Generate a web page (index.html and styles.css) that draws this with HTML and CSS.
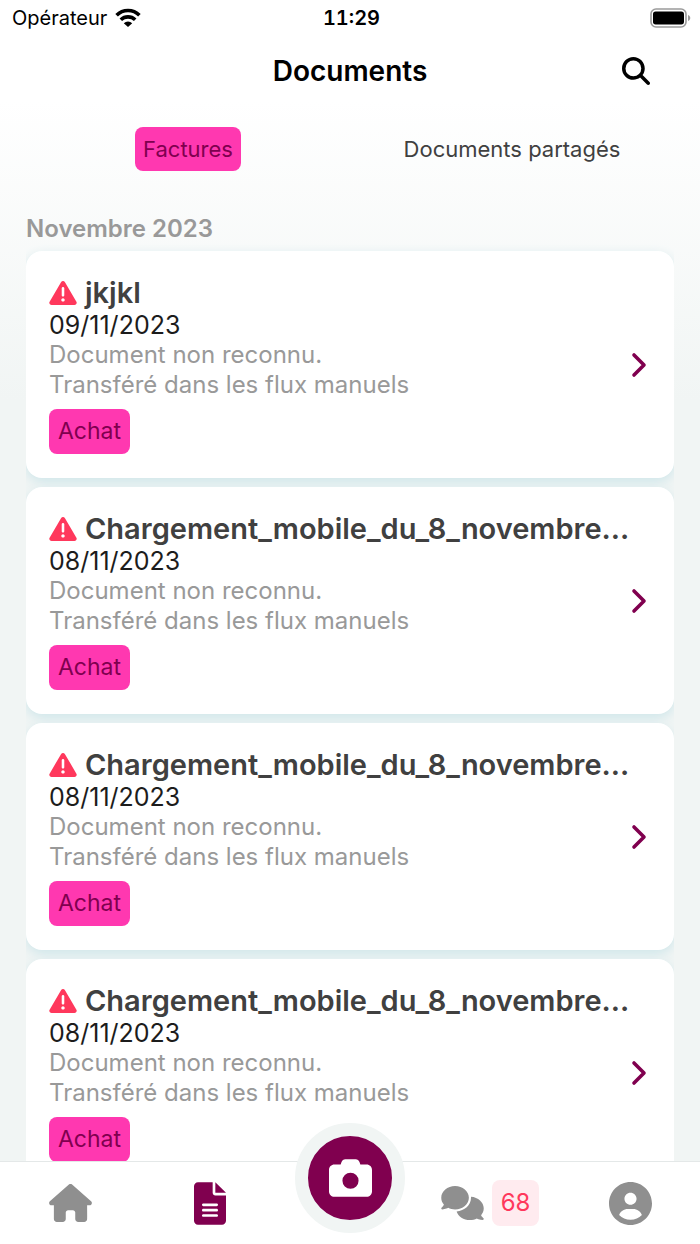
FILE: index.html
```
<!DOCTYPE html>
<html lang="fr">
  <head>
    <meta charset="UTF-8" />
    <meta name="viewport" content="width=device-width, initial-scale=1.0" />
    <title>Documents</title>
    <link rel="stylesheet" href="styles.css">
  </head>
  <body>
    <!-- shared icons -->
    <svg class="sprite" aria-hidden="true">
      <symbol id="warning" viewBox="0 32 512 448">
        <path d="M506.3 417l-213.3-364c-16.33-28-57.54-28-73.98 0l-213.2 364C-10.59 444.9 9.849 480 42.74 480h426.6C502.1 480 522.6 445 506.3 417zM232 168c0-13.25 10.75-24 24-24S280 154.8 280 168v128c0 13.25-10.75 24-24 24S232 309.3 232 296V168zM256 416c-17.36 0-31.44-14.08-31.44-31.44c0-17.36 14.07-31.44 31.44-31.44s31.44 14.08 31.44 31.44C287.4 401.9 273.4 416 256 416z" />
      </symbol>
      <symbol id="chevron" viewBox="0 0 16 26">
        <path d="M3 3L13 13L3 23" fill="none" stroke="currentColor" stroke-width="3.6" stroke-linecap="round" stroke-linejoin="round" />
      </symbol>
    </svg>

    <div class="statusBar">
      <div class="carrier">
        <span>Opérateur</span>
        <svg class="wifi" viewBox="0 0 26 20">
          <path d="M1.6 7.2A16 16 0 0 1 24.4 7.2" />
          <path d="M5.8 11.8A10.4 10.4 0 0 1 20.2 11.8" />
          <path class="dot" d="M13 19L8.8 15.2A6 6 0 0 1 17.2 15.2Z" />
        </svg>
      </div>
      <time class="clock">11:29</time>
      <svg class="battery" viewBox="0 0 41 20">
        <rect x="1" y="1" width="35" height="18" rx="5" fill="none" stroke="#9b9b9b" stroke-width="1.6" />
        <rect x="3" y="3.6" width="31" height="12.8" rx="2.6" />
        <path d="M38 7C41 8 41 12 38 13Z" fill="#9b9b9b" />
      </svg>
    </div>

    <header>
      <h1>Documents</h1>
      <button class="searchBtn" aria-label="Rechercher">
        <svg viewBox="0 0 512 512">
          <path d="M416 208c0 45.9-14.9 88.3-40 122.7L502.6 457.4c12.5 12.5 12.5 32.8 0 45.3s-32.8 12.5-45.3 0L330.7 376c-34.4 25.2-76.8 40-122.7 40C93.1 416 0 322.9 0 208S93.1 0 208 0S416 93.1 416 208zM208 352a144 144 0 1 0 0-288 144 144 0 1 0 0 288z" />
        </svg>
      </button>
    </header>

    <div class="tabs">
      <button class="tab active">Factures</button>
      <button class="tab">Documents partagés</button>
    </div>

    <main>
      <h2>Novembre 2023</h2>
      <ul class="list">
        <li>
          <a class="card" href="#">
            <div class="info">
              <div class="name">
                <svg><use href="#warning" /></svg>
                <h3>jkjkl</h3>
              </div>
              <p class="date">09/11/2023</p>
              <p class="state">Document non reconnu.</p>
              <p class="state">Transféré dans les flux manuels</p>
              <span class="tag">Achat</span>
            </div>
            <svg class="chevron"><use href="#chevron" /></svg>
          </a>
        </li>
        <li>
          <a class="card" href="#">
            <div class="info">
              <div class="name">
                <svg><use href="#warning" /></svg>
                <h3>Chargement_mobile_du_8_novembre...</h3>
              </div>
              <p class="date">08/11/2023</p>
              <p class="state">Document non reconnu.</p>
              <p class="state">Transféré dans les flux manuels</p>
              <span class="tag">Achat</span>
            </div>
            <svg class="chevron"><use href="#chevron" /></svg>
          </a>
        </li>
        <li>
          <a class="card" href="#">
            <div class="info">
              <div class="name">
                <svg><use href="#warning" /></svg>
                <h3>Chargement_mobile_du_8_novembre...</h3>
              </div>
              <p class="date">08/11/2023</p>
              <p class="state">Document non reconnu.</p>
              <p class="state">Transféré dans les flux manuels</p>
              <span class="tag">Achat</span>
            </div>
            <svg class="chevron"><use href="#chevron" /></svg>
          </a>
        </li>
        <li>
          <a class="card" href="#">
            <div class="info">
              <div class="name">
                <svg><use href="#warning" /></svg>
                <h3>Chargement_mobile_du_8_novembre...</h3>
              </div>
              <p class="date">08/11/2023</p>
              <p class="state">Document non reconnu.</p>
              <p class="state">Transféré dans les flux manuels</p>
              <span class="tag">Achat</span>
            </div>
            <svg class="chevron"><use href="#chevron" /></svg>
          </a>
        </li>
      </ul>
    </main>

    <nav>
      <a href="#" aria-label="Accueil">
        <svg class="home" viewBox="0 0 576 512">
          <path d="M575.8 255.5c0 18-15 32.1-32 32.1h-32l.7 160.2c0 2.7-.2 5.4-.5 8.1V472c0 22.1-17.9 40-40 40H456c-1.1 0-2.2 0-3.3-.1c-1.4 .1-2.8 .1-4.2 .1H416 392c-22.1 0-40-17.9-40-40V448 384c0-17.7-14.3-32-32-32H256c-17.7 0-32 14.3-32 32v64 24c0 22.1-17.9 40-40 40H160 128.1c-1.5 0-3-.1-4.5-.2c-1.2 .1-2.4 .2-3.6 .2H104c-22.1 0-40-17.9-40-40V360c0-.9 0-1.9 .1-2.8V287.6H32c-18 0-32-14-32-32.1c0-9 3-17 10-24L266.4 8c7-7 15-8 22-8s15 2 21 7L564.8 231.5c8 7 12 15 11 24z" />
        </svg>
      </a>
      <a class="current" href="#" aria-label="Documents">
        <svg class="file" viewBox="0 0 384 512">
          <path d="M256 0v128h128L256 0zM224 128V0H48C21.49 0 0 21.49 0 48v416C0 490.5 21.49 512 48 512h288c26.51 0 48-21.49 48-48V160H256C238.3 160 224 145.7 224 128zM272 416h-160C103.2 416 96 408.8 96 400S103.2 384 112 384h160c8.8 0 16 7.2 16 16S280.8 416 272 416zM272 352h-160C103.2 352 96 344.8 96 336S103.2 320 112 320h160c8.8 0 16 7.2 16 16S280.8 352 272 352zM288 272c0 8.8-7.2 16-16 16h-160C103.2 288 96 280.8 96 272S103.2 256 112 256h160C280.8 256 288 263.2 288 272z" />
        </svg>
      </a>
      <button class="cameraBtn" aria-label="Prendre une photo">
        <svg viewBox="0 32 512 448">
          <path d="M149.1 64.8L138.7 96H64C28.7 96 0 124.7 0 160V416c0 35.3 28.7 64 64 64H448c35.3 0 64-28.7 64-64V160c0-35.3-28.7-64-64-64H373.3L362.9 64.8C356.4 45.2 338.1 32 317.4 32H194.6c-20.7 0-39 13.2-45.5 32.8zM256 192a96 96 0 1 1 0 192 96 96 0 1 1 0-192z" />
        </svg>
      </button>
      <a href="#" aria-label="Messages">
        <svg class="comments" viewBox="0 0 640 512">
          <path d="M208 352c114.9 0 208-78.8 208-176S322.9 0 208 0S0 78.8 0 176c0 38.6 14.7 74.3 39.6 103.4c-3.5 9.4-8.7 17.7-14.2 24.7c-4.8 6.2-9.7 11-13.3 14.3c-1.8 1.6-3.3 2.9-4.3 3.7c-.5 .4-.9 .7-1.1 .8l-.2 .2C1 327.2-1.4 334.4 .8 340.9S9.1 352 16 352c21.8 0 43.8-5.6 62.1-12.5c9.2-3.5 17.8-7.4 25.3-11.4C134.1 343.3 169.8 352 208 352zM448 176c0 112.3-99.1 196.9-216.5 207C255.8 457.4 336.4 512 432 512c38.2 0 73.9-8.7 104.7-23.9c7.5 4 16 7.9 25.2 11.4c18.3 6.9 40.3 12.5 62.1 12.5c6.9 0 13.1-4.5 15.2-11.1c2.1-6.6-.2-13.8-5.8-17.9l-.2-.2c-.2-.2-.6-.4-1.1-.8c-1-.8-2.5-2-4.3-3.7c-3.6-3.3-8.5-8.1-13.3-14.3c-5.5-7-10.7-15.4-14.2-24.7c24.9-29 39.6-64.7 39.6-103.4c0-92.8-84.9-168.9-192.6-175.5c.4 5.1 .6 10.3 .6 15.5z" />
        </svg>
        <span class="badge">68</span>
      </a>
      <a href="#" aria-label="Profil">
        <svg class="user" viewBox="0 0 512 512">
          <path d="M256 0C114.6 0 0 114.6 0 256s114.6 256 256 256s256-114.6 256-256S397.4 0 256 0zM256 128c39.77 0 72 32.24 72 72S295.8 272 256 272c-39.76 0-72-32.24-72-72S216.2 128 256 128zM256 448c-52.93 0-100.9-21.53-135.7-56.29C136.5 349.9 176.5 320 224 320h64c47.54 0 87.54 29.88 103.7 71.71C356.9 426.5 308.9 448 256 448z" />
        </svg>
      </a>
    </nav>
  </body>
</html>
```
FILE: styles.css
```
* {
  margin: 0px;
  padding: 0px;
  box-sizing: border-box;
}
body {
  height: 100vh;
  display: flex;
  flex-direction: column;
  font-family: Inter, "Liberation Sans", sans-serif;
  background: linear-gradient(#fff 100px, #f1f5f4 400px);
  color: #000;
}
button {
  border: none;
  background: none;
  font-family: inherit;
}
a {
  color: inherit;
  text-decoration: none;
}
svg {
  fill: currentColor;
  flex-shrink: 0;
}
.sprite {
  display: none;
}

/* status bar */
.statusBar {
  display: grid;
  grid-template-columns: 1fr auto 1fr;
  align-items: center;
  height: 36px;
  padding: 0 9px 0 12px;
  font-size: 20px;
}
.carrier {
  display: flex;
  align-items: center;
  gap: 8px;
}
.wifi {
  width: 26px;
  height: 20px;
}
.wifi path {
  fill: none;
  stroke: currentColor;
  stroke-width: 3.6;
}
.wifi .dot {
  fill: currentColor;
  stroke: none;
}
.clock {
  font-weight: 600;
  font-variant-numeric: tabular-nums;
}
.battery {
  width: 41px;
  height: 20px;
  justify-self: end;
}

/* header */
header {
  display: grid;
  grid-template-columns: 1fr auto 1fr;
  align-items: center;
  height: 70px;
  padding: 0 50px;
}
h1 {
  grid-column: 2;
  font-size: 28px;
  font-weight: 600;
}
.searchBtn {
  justify-self: end;
  display: flex;
}
.searchBtn svg {
  width: 28px;
  height: 28px;
}

/* tabs */
.tabs {
  display: grid;
  grid-template-columns: 1fr 1fr;
  justify-items: center;
  margin: 21px 26px 0;
}
.tab {
  height: 44px;
  padding: 0 8px;
  border-radius: 8px;
  font-size: 22px;
  color: #404040;
}
.tab.active {
  background-color: #ff38b0;
  color: #80004f;
}

/* documents */
main {
  flex: 1;
  min-height: 0;
  margin: 0 26px;
  padding-top: 44px;
  overflow-y: auto;
  scrollbar-width: none;
}
h2 {
  font-size: 24px;
  line-height: 28px;
  font-weight: 600;
  color: #999;
}
.list {
  display: flex;
  flex-direction: column;
  gap: 9px;
  padding: 8px 0 60px;
  list-style: none;
}
.card {
  display: flex;
  align-items: center;
  justify-content: space-between;
  padding: 24px 27px 24px 23px;
  border-radius: 16px;
  background-color: #fff;
  box-shadow: 0 4px 12px #cfe6ea;
}
.info {
  min-width: 0;
}
.name {
  display: flex;
  align-items: center;
  gap: 8px;
  color: #ff385c;
}
.name svg {
  width: 28px;
  height: 24px;
}
h3 {
  font-size: 29px;
  line-height: 35px;
  font-weight: 600;
  color: #404040;
  white-space: nowrap;
}
.date,
.state {
  line-height: 30px;
}
.date {
  font-size: 25px;
  color: #1c1c1c;
}
.state {
  font-size: 24px;
  color: #999;
}
.tag {
  display: inline-block;
  margin-top: 9px;
  padding: 0 9px;
  border-radius: 8px;
  font-size: 23px;
  line-height: 45px;
  vertical-align: top;
  background-color: #ff38b0;
  color: #80004f;
}
.chevron {
  width: 16px;
  height: 26px;
  color: #80004f;
}

/* bottom navigation */
nav {
  display: grid;
  grid-template-columns: repeat(5, 1fr);
  align-items: center;
  justify-items: center;
  height: 83px;
  border-top: 1px solid #e4e8e8;
  background-color: #fff;
  color: #8f8f8f;
}
nav a {
  display: flex;
  align-items: center;
  gap: 8px;
}
nav .current {
  color: #80004f;
}
.home {
  width: 43px;
  height: 38px;
}
.file {
  width: 32px;
  height: 43px;
}
.comments {
  width: 43px;
  height: 34px;
}
.user {
  width: 43px;
  height: 43px;
}
.cameraBtn {
  align-self: start;
  display: flex;
  align-items: center;
  justify-content: center;
  width: 110px;
  height: 110px;
  margin-top: -39px;
  border: 13px solid #f1f5f4;
  border-radius: 50%;
  background-color: #80004f;
  color: #fff;
}
.cameraBtn svg {
  width: 43px;
  height: 38px;
}
.badge {
  padding: 0 9px;
  border-radius: 8px;
  font-size: 24px;
  line-height: 46px;
  background-color: #ffebef;
  color: #ff385c;
}
```
